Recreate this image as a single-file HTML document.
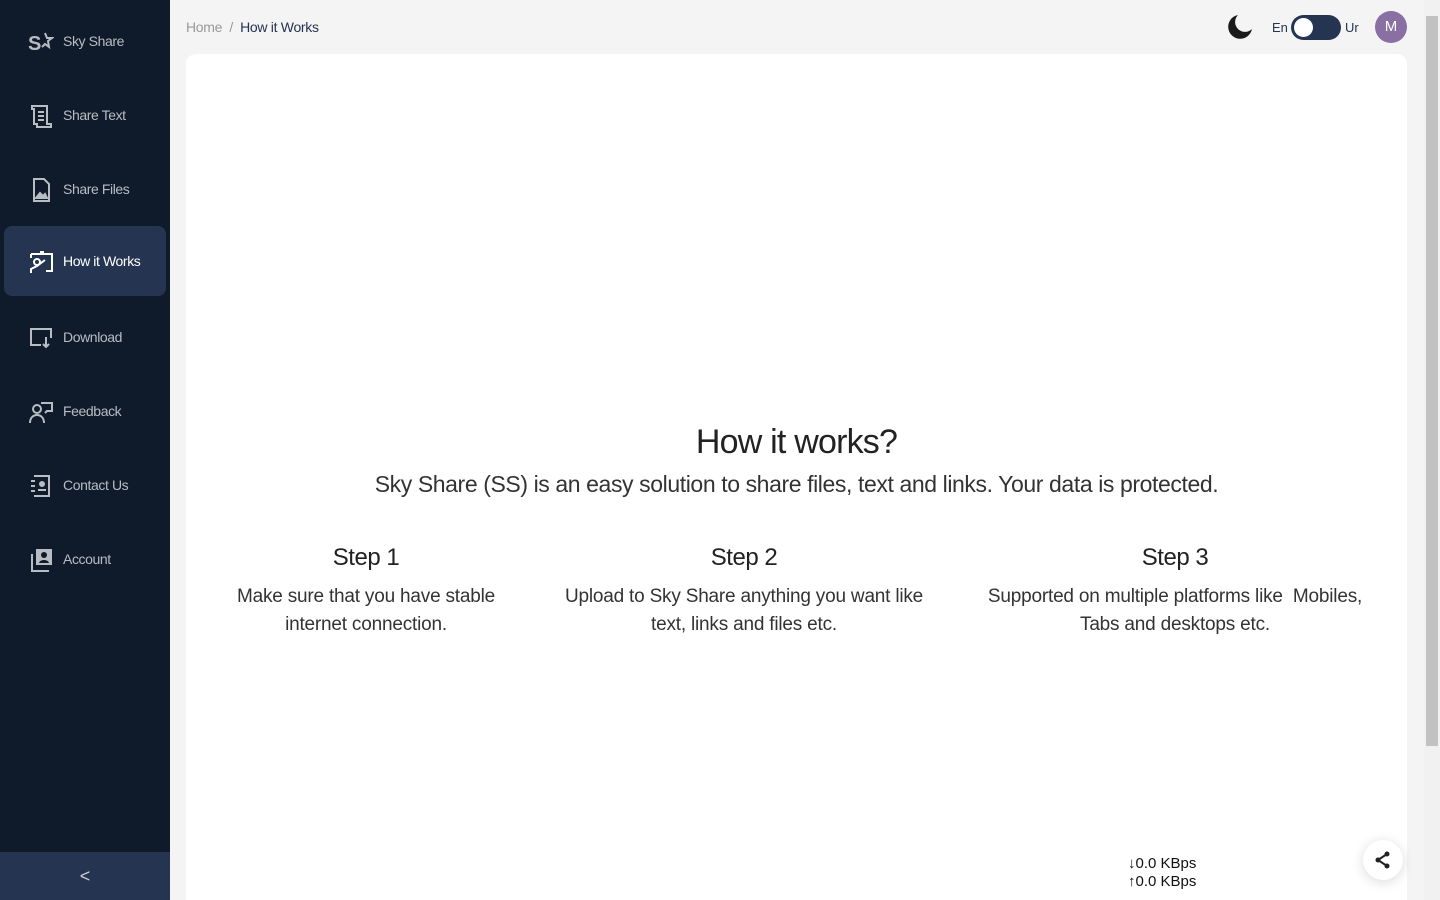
<!DOCTYPE html>
<html><head><meta charset="utf-8"><style>
*{margin:0;padding:0;box-sizing:border-box}
html{width:1440px;height:900px;overflow:hidden}
body{width:1440px;height:900px;overflow:hidden;background:#f4f4f4;font-family:"Liberation Sans",sans-serif;position:relative}
.sb{position:absolute;left:0;top:0;width:170px;height:900px;background:#0f1b2a}
.it{position:absolute;left:4px;width:162px;height:70px;border-radius:8px;color:#b8bcc3;font-size:14px;letter-spacing:-0.4px}
.it.act{background:#253450;color:#fff}
.it svg{position:absolute;left:24px;top:23px}
.it span{position:absolute;left:59px;top:27px}
.bot{position:absolute;left:0;top:852px;width:170px;height:48px;background:#253450;color:#ccc;text-align:center;line-height:48px;font-size:18px}
.card{position:absolute;left:186px;top:54px;width:1221px;height:846px;background:#fff;border-radius:10px 10px 0 0}
.bc{position:absolute;left:186px;top:19px;font-size:14px;color:#999;letter-spacing:-0.3px}
.bc b{font-weight:normal;color:#253450}
h1{position:absolute;left:0;width:1221px;top:369px;text-align:center;font-weight:normal;font-size:34px;color:#222;letter-spacing:-0.8px}
.sub{position:absolute;left:0;width:1221px;top:417px;text-align:center;font-size:23px;color:#333;letter-spacing:-0.4px}
.st{position:absolute;top:490px;text-align:center;color:#333}
.st h2{font-weight:normal;font-size:24px;color:#222;margin-bottom:11px;letter-spacing:-0.5px}
.st p{font-size:19px;line-height:28px;letter-spacing:-0.2px}
.sc{position:absolute;right:0;top:0;width:16px;height:900px;background:#f1f1f1}
.th{position:absolute;left:2px;top:16px;width:12px;height:730px;background:#c1c1c1}
</style></head><body>
<div class="sb">
<div class="it" style="top:6px"><svg width="26" height="26" viewBox="0 0 26 26"><text x="0" y="21" font-size="20" font-weight="bold" fill="#b8bcc3" font-family="Liberation Sans">S</text><path d="M17 4l2 5 5 0-4 3 1 6-4-3-3 3" fill="none" stroke="#b8bcc3" stroke-width="2"/></svg><span>Sky Share</span></div>
<div class="it" style="top:80px"><svg width="26" height="26" viewBox="0 0 26 26" fill="none" stroke="#b8bcc3" stroke-width="2"><path d="M4 3h15v18h4v3H9v-3H6V6H4z M10 9h6M10 13h6M10 17h6"/></svg><span>Share Text</span></div>
<div class="it" style="top:154px"><svg width="26" height="26" viewBox="0 0 26 26" fill="none" stroke="#b8bcc3" stroke-width="2"><path d="M6 2h10l5 5v17H6z"/><path d="M8 21l4-5 3 3 2-2 2 4z" fill="#b8bcc3"/></svg><span>Share Files</span></div>
<div class="it act" style="top:226px"><svg width="26" height="26" viewBox="0 0 26 26" fill="none" stroke="#fff" stroke-width="2"><path d="M3 5h21v17h-6M12 3h4M3 5v4"/><circle cx="9" cy="13" r="3"/><path d="M3 24v-4l6-3 8-6"/></svg><span>How it Works</span></div>
<div class="it" style="top:302px"><svg width="26" height="26" viewBox="0 0 26 26" fill="none" stroke="#b8bcc3" stroke-width="2"><path d="M13 20H3V4h20v9M18 12v10M15 19l3 3 3-3"/></svg><span>Download</span></div>
<div class="it" style="top:376px"><svg width="26" height="26" viewBox="0 0 26 26" fill="none" stroke="#b8bcc3" stroke-width="2"><circle cx="9" cy="10" r="4"/><path d="M2 24c0-5 3-8 7-8s7 3 7 8M13 4h11v8h-5l-2 2"/></svg><span>Feedback</span></div>
<div class="it" style="top:450px"><svg width="26" height="26" viewBox="0 0 26 26" fill="none" stroke="#b8bcc3" stroke-width="2"><path d="M6 3h15v20H6M3 8h4M3 13h4M3 18h4"/><circle cx="14" cy="11" r="2" fill="#b8bcc3"/><path d="M10 17h8" /></svg><span>Contact Us</span></div>
<div class="it" style="top:524px"><svg width="26" height="26" viewBox="0 0 26 26"><rect x="8" y="2" width="16" height="16" fill="#b8bcc3"/><circle cx="16" cy="8" r="3" fill="#0f1b2a"/><path d="M11 16c1-4 9-4 10 0z" fill="#0f1b2a"/><path d="M4 7v17h17" fill="none" stroke="#b8bcc3" stroke-width="2"/></svg><span>Account</span></div>
<div class="bot">&lt;</div>
</div>
<div class="bc">Home &nbsp;/&nbsp; <b>How it Works</b></div>
<svg style="position:absolute;left:1227px;top:14px" width="26" height="26" viewBox="0 0 26 26"><path d="M11 1a12 12 0 1 0 14 14A9 9 0 0 1 11 1z" fill="#1a1a1a"/></svg>
<div style="position:absolute;left:1272px;top:20px;font-size:13px;color:#253450">En</div>
<div style="position:absolute;left:1291px;top:15px;width:50px;height:25px;border-radius:13px;background:#253450"><div style="position:absolute;left:3px;top:3px;width:19px;height:19px;border-radius:50%;background:#fff"></div></div>
<div style="position:absolute;left:1345px;top:20px;font-size:13px;color:#253450">Ur</div>
<div style="position:absolute;left:1375px;top:11px;width:32px;height:32px;border-radius:50%;background:#8a6fa3;color:#fff;text-align:center;line-height:32px;font-size:15px">M</div>
<div class="card">
<h1>How it works?</h1>
<div class="sub">Sky Share (SS) is an easy solution to share files, text and links. Your data is protected.</div>
<div class="st" style="left:30px;width:300px"><h2>Step 1</h2><p>Make sure that you have stable internet connection.</p></div>
<div class="st" style="left:368px;width:380px"><h2>Step 2</h2><p>Upload to Sky Share anything you want like text, links and files etc.</p></div>
<div class="st" style="left:789px;width:400px"><h2>Step 3</h2><p>Supported on multiple platforms like&nbsp; Mobiles, Tabs and desktops etc.</p></div>
</div>
<div style="position:absolute;left:1128px;top:855px;font-size:15px;line-height:18px;color:#111">↓0.0 KBps<br>↑0.0 KBps</div>
<div style="position:absolute;left:1363px;top:840px;width:40px;height:40px;border-radius:50%;background:#fff;box-shadow:0 2px 12px rgba(0,0,0,.15)"><svg style="position:absolute;left:11px;top:11px" width="18" height="18" viewBox="0 0 18 18"><circle cx="13" cy="3" r="2.5" fill="#222"/><circle cx="13" cy="15" r="2.5" fill="#222"/><circle cx="4" cy="9" r="2.5" fill="#222"/><path d="M13 3L4 9l9 6" stroke="#222" stroke-width="2" fill="none"/></svg></div>
<div class="sc"><div class="th"></div></div>
</body></html>
